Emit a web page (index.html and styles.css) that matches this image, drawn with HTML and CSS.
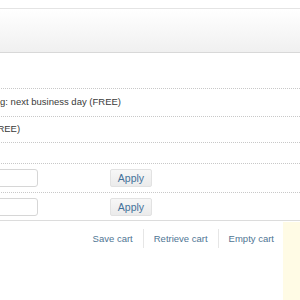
FILE: index.html
```html
<!DOCTYPE html>
<html lang="en">
<head>
  <meta charset="UTF-8" />
  <meta name="viewport" content="width=device-width, initial-scale=1.0"/>
  <title>Cart</title>
  <link rel="stylesheet" href="styles.css">
</head>
<body>

  <div class="page-head"></div>

  <div class="cart">
    <div class="row">
      <span class="opt">Express shipping: next business day (FREE)</span>
    </div>
    <div class="row">
      <span class="opt">Store pickup (FREE)</span>
    </div>
    <div class="row row-empty"></div>
    <div class="row row-code">
      <input class="code-input" type="text" />
      <button class="apply-btn">Apply</button>
    </div>
    <div class="row row-code">
      <input class="code-input" type="text" />
      <button class="apply-btn">Apply</button>
    </div>
  </div>

  <div class="cart-footer">
    <div class="cart-links">
      <a href="#">Save cart</a>
      <a href="#">Retrieve cart</a>
      <a href="#">Empty cart</a>
    </div>
    <div class="side-note"></div>
  </div>

</body>
</html>
```

FILE: styles.css
```css
* {
  margin: 0;
  padding: 0;
  box-sizing: border-box;
}

body {
  font-family: 'Liberation Sans', Arial, sans-serif;
  font-size: 9.5px;
  color: #3a3a3a;
  background: #fff;
  overflow: hidden;
}

.page-head {
  margin-top: 8px;
  height: 45px;
  border-top: 1px solid #e4e4e4;
  border-bottom: 1px solid #d8d8d8;
  background: linear-gradient(#fff, #f0f0f0);
}

.cart {
  margin-top: 35px;
  margin-left: -120px;
  border-bottom: 1px solid #dcdcdc;
}

.row {
  display: flex;
  align-items: center;
  border-top: 1px dotted #c8c8c8;
  height: 28px;
}

.row:nth-child(2) {
  height: 26px;
}

.row-empty {
  height: 21px;
}

.row-code {
  height: 29px;
}

.row-code:last-child {
  height: 28px;
}

.opt {
  padding-left: 53px;
  padding-bottom: 2px;
  line-height: 1;
}

.code-input {
  margin-left: 8px;
  width: 150px;
  height: 18px;
  border: 1px solid #d6d6d6;
  border-radius: 3px;
  background: #fff;
}

.apply-btn {
  margin-left: 72px;
  width: 42px;
  height: 18px;
  border: 1px solid #e2e2e2;
  border-radius: 2px;
  background: linear-gradient(#f7f7f7, #ebebeb);
  color: #44719a;
  font-family: inherit;
  font-size: 10.5px;
}

.cart-footer {
  display: flex;
  height: 80px;
  margin-top: 1px;
}

.cart-links {
  flex: 1;
  display: flex;
  justify-content: flex-end;
  align-items: flex-start;
  padding-top: 7px;
  padding-right: 9px;
}

.cart-links a {
  color: #4f7594;
  text-decoration: none;
  padding: 4px 10px;
  border-left: 1px solid #e6e6e6;
}

.cart-links a:first-child {
  border-left: none;
}

.cart-links a:last-child {
  padding-right: 0;
}

.side-note {
  width: 17px;
  background: #fffbe5;
}
```
